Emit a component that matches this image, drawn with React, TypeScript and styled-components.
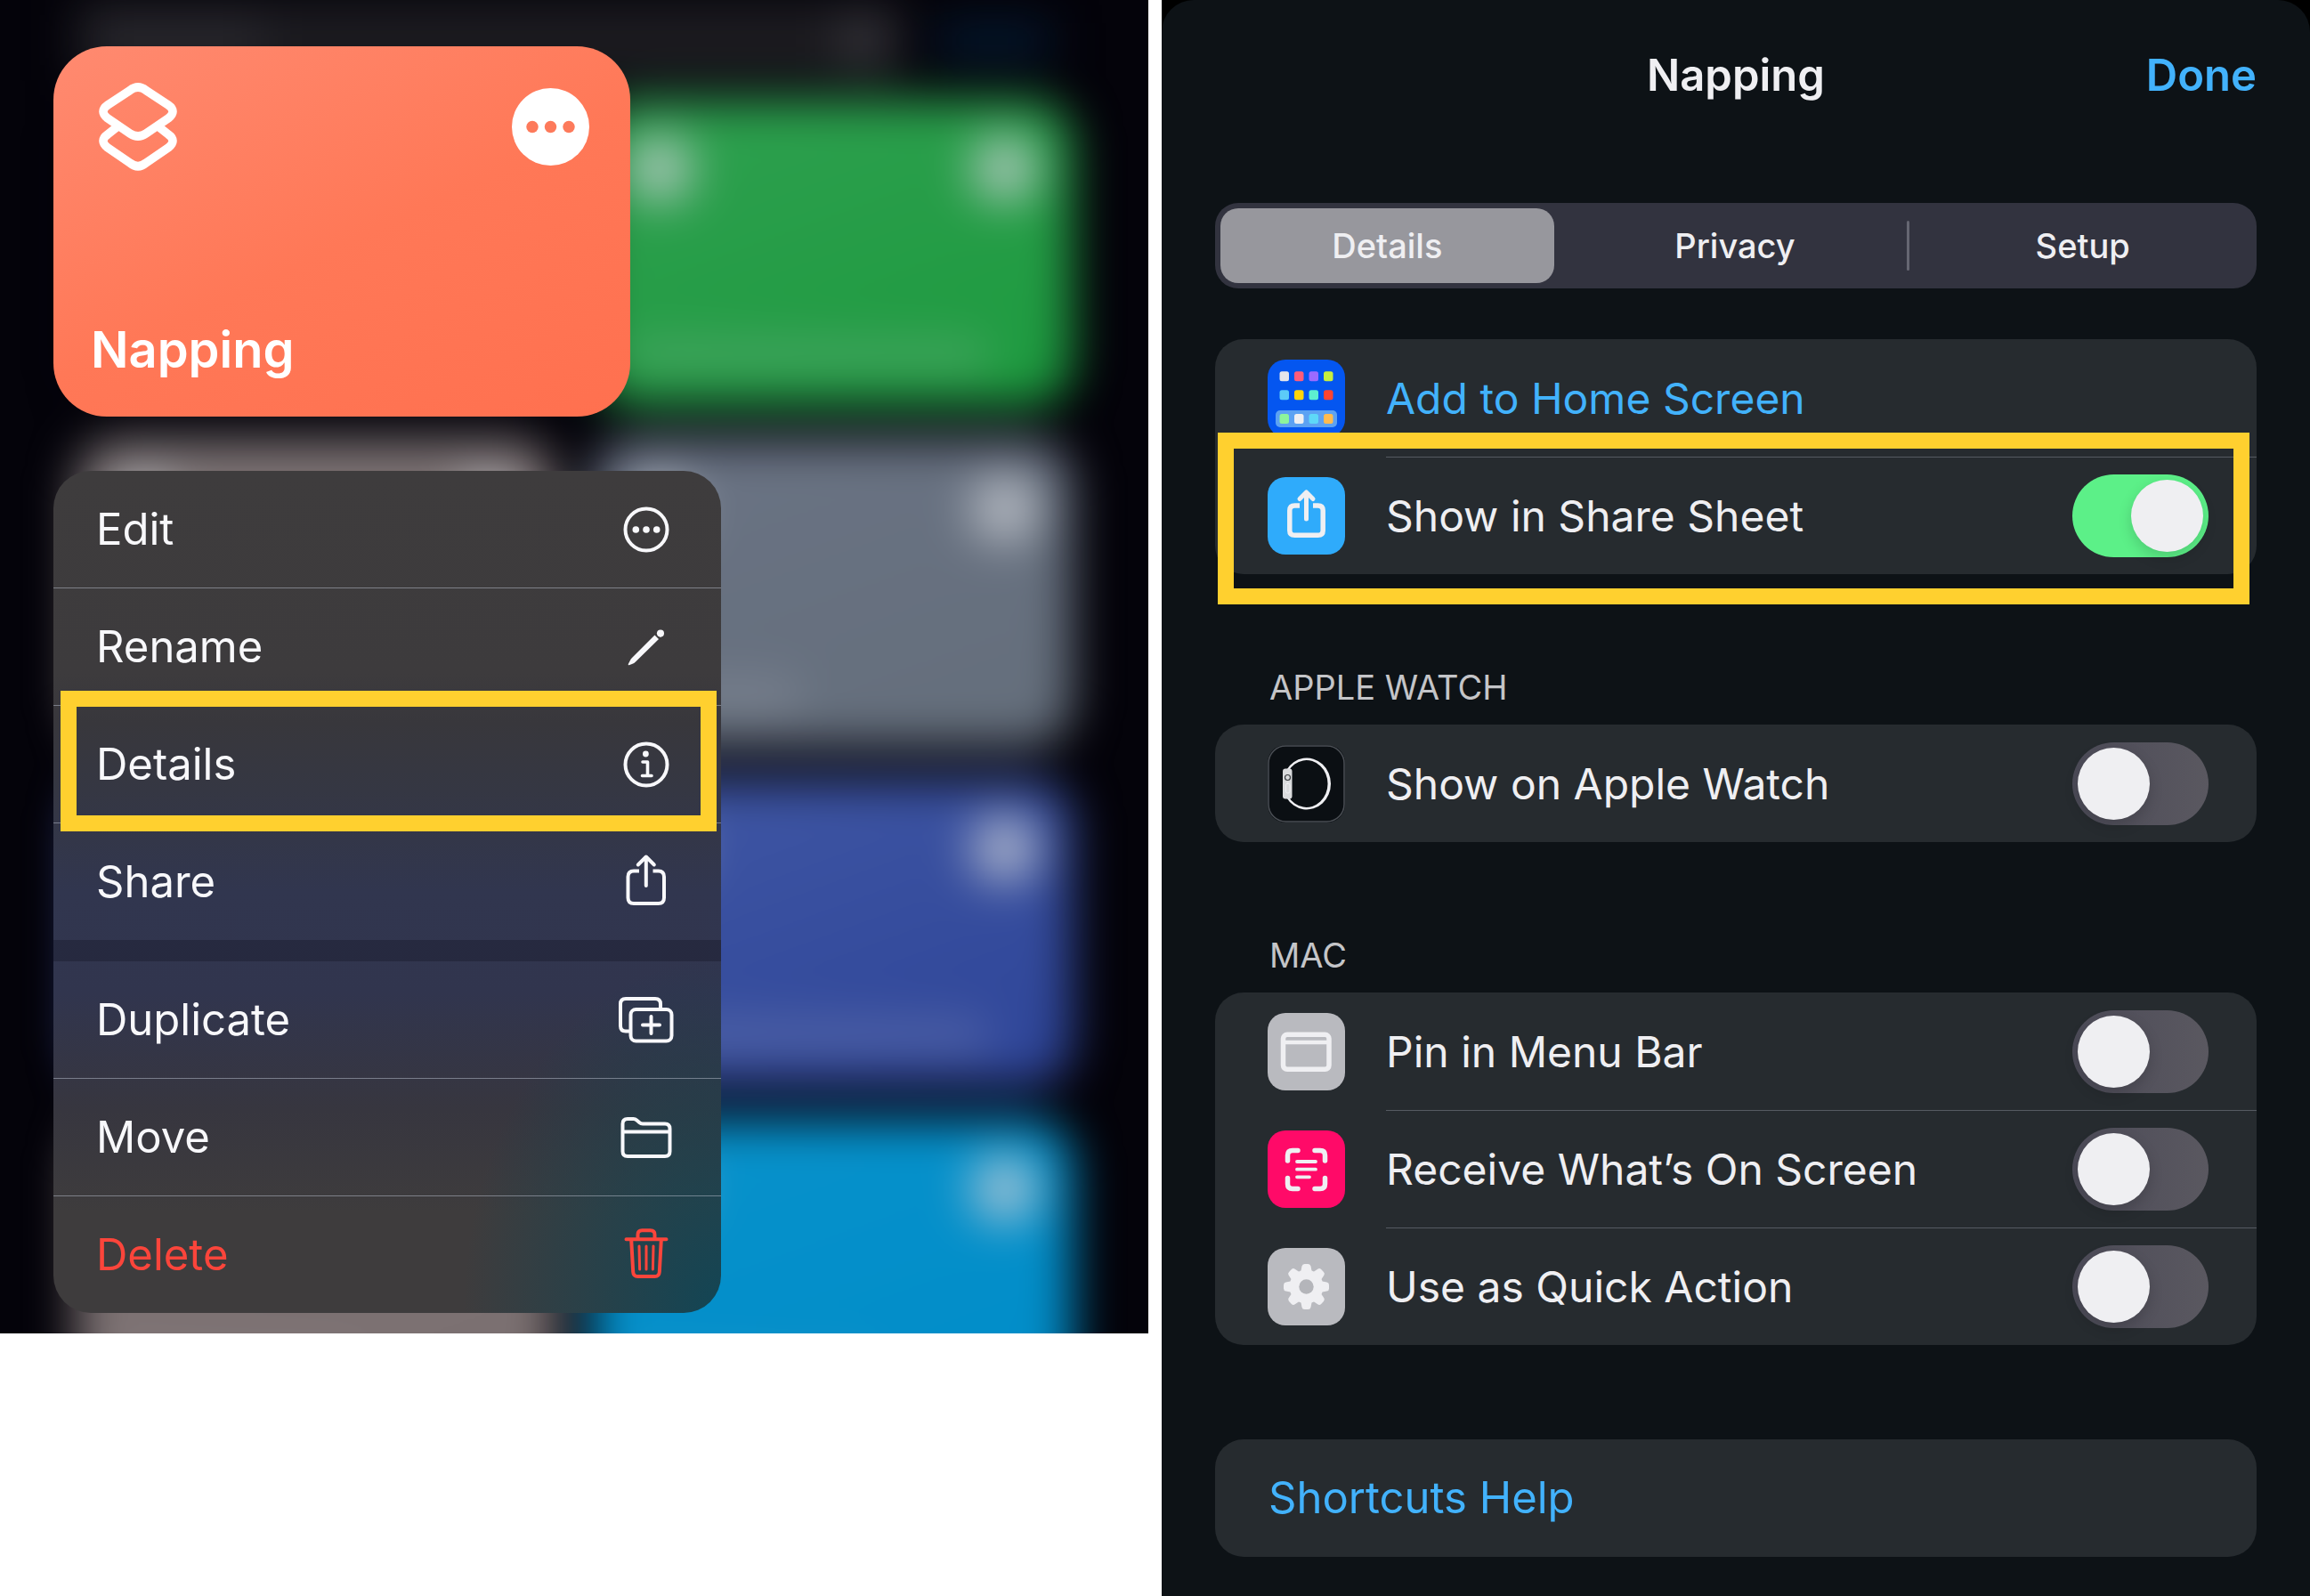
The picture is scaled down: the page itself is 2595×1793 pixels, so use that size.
import React, { useState } from "react";
import styled, { createGlobalStyle } from "styled-components";

const GlobalStyle = createGlobalStyle`
  *, *::before, *::after { box-sizing: border-box; }
  body {
    margin: 0;
    background: #ffffff;
    font-family: Inter, "Liberation Sans", sans-serif;
  }
  button, input { font: inherit; }
  button {
    margin: 0;
    padding: 0;
    border: 0;
    background: none;
    color: inherit;
    text-align: left;
    cursor: pointer;
  }
`;

const Page = styled.main`
  display: grid;
  grid-template-columns: 1fr 1fr;
  gap: 15px;
  align-items: start;
`;

/* ---------- Library screen with context menu ---------- */

const Library = styled.section`
  position: relative;
  overflow: hidden;
  display: flex;
  flex-direction: column;
  align-items: flex-start;
  gap: 61px;
  padding: 52px 60px 23px;
  background: #04030a;
`;

const Backdrop = styled.div`
  position: absolute;
  inset: 0;
  padding: 0 85px;
  filter: blur(26px);
`;

const SearchBar = styled.div`
  display: grid;
  grid-template-columns: 1fr 190px;
  align-items: center;
  height: 66px;
  margin-bottom: 46px;
`;

const SearchField = styled.div`
  display: flex;
  justify-content: space-between;
  align-items: center;
  height: 90px;
  padding: 0 20px;
  background: #1c1b20;
`;

const Smudge = styled.span<{ $width: number; $color: string }>`
  width: ${(p) => p.$width}px;
  height: 44px;
  background: ${(p) => p.$color};
`;

const CancelSmudge = styled(Smudge)`
  margin-left: 36px;
`;

const TileGrid = styled.div`
  display: grid;
  grid-template-columns: 1fr 1fr;
  grid-auto-rows: 345px;
  gap: 37px 40px;
`;

const Tile = styled.div<{ $from: string; $to: string }>`
  display: flex;
  flex-direction: column;
  justify-content: space-between;
  padding: 40px 38px;
  border-radius: 50px;
  background: linear-gradient(160deg, ${(p) => p.$from}, ${(p) => p.$to});
`;

const TileTop = styled.div`
  display: flex;
  justify-content: space-between;
`;

const TileDot = styled.span`
  width: 76px;
  height: 76px;
  border-radius: 50%;
  background: rgba(205, 210, 215, 0.75);
`;

const TileCaption = styled.span<{ $width: string }>`
  width: ${(p) => p.$width};
  height: 34px;
  background: rgba(200, 200, 210, 0.22);
`;

const ShortcutCard = styled.article`
  position: relative;
  display: flex;
  flex-direction: column;
  justify-content: space-between;
  width: 648px;
  height: 416px;
  padding: 41px 45px 40px 42px;
  border-radius: 60px;
  background: linear-gradient(155deg, #ff8a70 0%, #ff7857 52%, #ff704f 100%);
  color: #ffffff;
`;

const CardTop = styled.div`
  display: flex;
  justify-content: space-between;
  align-items: center;
`;

const CardTitle = styled.h2`
  margin: 0;
  font-size: 56px;
  line-height: 70px;
  font-weight: 600;
`;

const IconButton = styled.button`
  display: block;
  height: 88px;
`;

const Menu = styled.div`
  position: relative;
  width: 750px;
  overflow: hidden;
  border-radius: 42px;
  background:
    radial-gradient(ellipse 290px 400px at 100% 100%, rgba(16, 70, 86, 0.95), rgba(20, 66, 82, 0) 100%),
    linear-gradient(
      180deg,
      #3e3c3d 0%,
      #3d3b3d 24%,
      #38373c 30%,
      #353743 38%,
      #31364f 50%,
      #31354e 62%,
      #37363f 76%,
      #3e3c3d 88%
    );
`;

const MenuGroup = styled.div`
  & + & {
    border-top: 24px solid rgba(10, 10, 25, 0.28);
  }
`;

const MenuRow = styled.div`
  position: relative;
  & + & {
    border-top: 1px solid rgba(190, 195, 210, 0.5);
  }
`;

const MenuItem = styled.button<{ $danger?: boolean }>`
  display: flex;
  justify-content: space-between;
  align-items: center;
  width: 100%;
  height: 131px;
  padding: 0 52px 0 48px;
  font-size: 49px;
  line-height: 64px;
  color: ${(p) => (p.$danger ? "#fb453b" : "#f8f8fb")};
`;

const Highlight = styled.div<{ $inset: string }>`
  position: absolute;
  z-index: 2;
  inset: ${(p) => p.$inset};
  border: 18px solid #ffd02f;
  pointer-events: none;
`;

/* ---------- Details sheet ---------- */

const SheetFrame = styled.section`
  background: #000000;
`;

const Sheet = styled.div`
  min-height: 100vh;
  padding: 0 60px 40px;
  border-radius: 36px 36px 0 0;
  background: #0d1216;
  color: #efeff2;
`;

const SheetHeader = styled.header`
  display: grid;
  grid-template-columns: 1fr auto 1fr;
  align-items: center;
  height: 170px;
  margin-bottom: 58px;
  font-size: 49px;
  line-height: 64px;
  font-weight: 600;
`;

const SheetTitle = styled.h1`
  grid-column: 2;
  margin: 0;
  font: inherit;
`;

const DoneButton = styled.button`
  justify-self: end;
  color: #42b2fc;
`;

const Segments = styled.div`
  display: grid;
  grid-template-columns: repeat(3, 1fr);
  gap: 16px;
  height: 96px;
  margin-bottom: 57px;
  padding: 6px 8px 6px 6px;
  border-radius: 26px;
  background: #32333f;
`;

const Segment = styled.button<{ $active: boolean; $divided: boolean }>`
  position: relative;
  border-radius: 20px;
  background: ${(p) => (p.$active ? "#97979d" : "transparent")};
  font-size: 38px;
  line-height: 48px;
  font-weight: 500;
  text-align: center;

  &::before {
    content: "";
    display: ${(p) => (p.$divided ? "block" : "none")};
    position: absolute;
    left: -10px;
    top: 14px;
    bottom: 14px;
    width: 3px;
    border-radius: 2px;
    background: #666772;
  }
`;

const Section = styled.section<{ $gap: number }>`
  margin-bottom: ${(p) => p.$gap}px;
`;

const SectionLabel = styled.h2`
  margin: 0 0 18px;
  padding: 0 61px;
  font-size: 38px;
  line-height: 48px;
  font-weight: 400;
  color: #c4c5c8;
`;

const Group = styled.div`
  border-radius: 32px;
  background: #262b2f;
`;

const Row = styled.div`
  position: relative;
  display: grid;
  grid-template-columns: 87px 1fr;
  column-gap: 46px;
  align-items: center;
  height: 132px;
  padding-left: 59px;
  font-size: 48px;
  line-height: 64px;
`;

const RowBody = styled.div<{ $divider: boolean }>`
  display: flex;
  justify-content: space-between;
  align-items: center;
  height: 132px;
  padding-right: 54px;
  border-top: 1px solid ${(p) => (p.$divider ? "#555a62" : "transparent")};
`;

const RowLabel = styled.label`
  cursor: pointer;
`;

const RowAction = styled.button`
  color: #42b2fc;
`;

const Toggle = styled.input`
  appearance: none;
  display: block;
  width: 153px;
  height: 93px;
  margin: 0;
  padding: 6px;
  border-radius: 47px;
  background: linear-gradient(90deg, #4c4b58, #5a5860);
  cursor: pointer;

  &::before {
    content: "";
    display: block;
    width: 81px;
    height: 81px;
    border-radius: 50%;
    background: #efeff2;
    box-shadow: 0 6px 16px rgba(0, 0, 0, 0.16);
  }

  &:checked {
    background: #5cf088;
  }

  &:checked::before {
    margin-left: 60px;
  }
`;

const HelpLink = styled.a`
  display: block;
  padding: 34px 60px;
  font-size: 49px;
  line-height: 64px;
  color: #42b2fc;
  text-decoration: none;
`;

/* ---------- Icons ---------- */

const ShortcutsLogo = () => (
  <svg width="102" height="99" viewBox="-9 0 102 99" fill="none" stroke="#fff" strokeWidth="9.6" aria-hidden="true">
    <path d="M35 8.5 Q44 1.5 53 8.5 L78 25 Q88 32 78 40 L53 57 Q44 63 35 57 L10 40 Q0 32 10 25 Z" />
    <path d="M20 50 L10 58 Q0 65 10 73 L35 90 Q44 97.5 53 90 L78 73 Q88 65 78 58 L68 50" />
  </svg>
);

const MoreIcon = () => (
  <svg width="88" height="88" viewBox="0 0 88 88" aria-hidden="true">
    <circle cx="43.5" cy="43.5" r="43.5" fill="#fff" />
    <g fill="#fd7a5b">
      <circle cx="23" cy="43.5" r="6.7" />
      <circle cx="43.5" cy="43.5" r="6.7" />
      <circle cx="64" cy="43.5" r="6.7" />
    </g>
  </svg>
);

const MenuGlyph = ({ children }: { children: React.ReactNode }) => (
  <svg
    width="64"
    height="64"
    viewBox="0 0 64 64"
    fill="none"
    stroke="currentColor"
    strokeWidth="4"
    strokeLinecap="round"
    strokeLinejoin="round"
    aria-hidden="true"
  >
    {children}
  </svg>
);

const glyphs = {
  edit: (
    <>
      <circle cx="32" cy="32" r="23.5" />
      <g fill="currentColor" stroke="none">
        <circle cx="20.3" cy="32" r="3.8" />
        <circle cx="32" cy="32" r="3.8" />
        <circle cx="43.7" cy="32" r="3.8" />
      </g>
    </>
  ),
  rename: (
    <g fill="currentColor" stroke="none">
      <path d="M41.5 18.5 L46 23 L20 48.5 Q18.5 50 16 51 L12.6 52.2 Q11.3 52.4 11.8 51 L13.6 47.5 Q14.6 45.4 16 44 Z" />
      <circle cx="48" cy="16.6" r="4" />
      <path d="M43.6 16.6 L48 21 L49.5 19.5 L45 15 Z" />
    </g>
  ),
  details: (
    <>
      <circle cx="32" cy="32" r="23.5" />
      <circle cx="31.4" cy="20" r="3.4" fill="currentColor" stroke="none" />
      <path d="M28 29 H33.5 V44.5 M27.5 44.5 H38" strokeWidth="3.6" />
    </>
  ),
  share: (
    <>
      <path d="M24 19.5 H18 Q11.5 19.5 11.5 26 V49.5 Q11.5 56 18 56 H45.5 Q52 56 52 49.5 V26 Q52 19.5 45.5 19.5 H39.5" strokeLinecap="butt" />
      <path d="M31.8 4 V36 M22.8 12.5 L31.8 3.5 L40.8 12.5" />
    </>
  ),
  duplicate: (
    <>
      <path d="M14 44.5 H9 Q3 44.5 3 38.5 V14 Q3 8 9 8 H42 Q48 8 48 14 V19" strokeLinecap="butt" />
      <rect x="14.5" y="20" width="46" height="35.5" rx="6" />
      <path d="M37.5 28 V47 M28 37.5 H47" />
    </>
  ),
  move: (
    <path d="M5.5 25.5 H58.5 M5.5 16.5 Q5.5 11 11 11 H17.5 Q19.7 11 21.3 12.4 L24.2 15 Q25.8 16.4 28 16.4 H53 Q58.5 16.4 58.5 22 V47.5 Q58.5 53 53 53 H11 Q5.5 53 5.5 47.5 Z" />
  ),
  remove: (
    <>
      <path d="M9.5 14.3 H54.5 M22.5 13 V9 Q22.5 4.2 27.3 4.2 H36.7 Q41.5 4.2 41.5 9 V13" />
      <path d="M15.2 15 L17.2 51 Q17.5 56 22.5 56 H41.5 Q46.5 56 46.8 51 L48.8 15" />
      <path d="M24 22 L24.6 48 M32 22 V48 M40 22 L39.4 48" strokeWidth="3" />
    </>
  ),
};

const AppTile = ({ fill, children }: { fill: string; children: React.ReactNode }) => (
  <svg
    width="87"
    height="87"
    viewBox="0 0 87 87"
    fill="none"
    stroke="#efeff2"
    strokeLinecap="round"
    strokeLinejoin="round"
    aria-hidden="true"
  >
    <rect width="87" height="87" rx="20" fill={fill} stroke="none" />
    {children}
  </svg>
);

const homeColors = [
  ["#e6e6ea", "#ff5c7a", "#9b6bff", "#c6ee3e"],
  ["#5ccbf8", "#ffd60a", "#5eefd0", "#ff4430"],
  ["#8df59c", "#efeff2", "#5ed8f8", "#ffbb50"],
];

const HomeTile = () => (
  <AppTile fill="#0456f0">
    <g stroke="none">
      <rect x="9" y="57" width="69" height="19" rx="5" fill="#5ca2f3" />
      {homeColors.map((row, r) =>
        row.map((color, c) => (
          <rect key={color} x={13.5 + c * 16.5} y={[13.2, 34.2, 61][r]} width="10.5" height="11" rx="2.5" fill={color} />
        ))
      )}
    </g>
  </AppTile>
);

const ShareTile = () => (
  <AppTile fill="#2fabfb">
    <g strokeWidth="5.5">
      <path d="M36 32 H30.5 Q24.8 32 24.8 37.5 V60 Q24.8 65.3 30.5 65.3 H56.5 Q62.2 65.3 62.2 60 V37.5 Q62.2 32 56.5 32 H51" strokeLinecap="butt" />
      <path d="M43.5 18 V47 M36 24.5 L43.5 17 L51 24.5" strokeWidth="5" />
    </g>
  </AppTile>
);

const WatchTile = () => (
  <AppTile fill="#0b0f13">
    <rect x="1" y="1" width="85" height="85" rx="19.5" stroke="#4b4f55" strokeWidth="1.5" />
    <path
      d="M21.2 28 A27 29 0 1 1 21.2 59 L23.2 57.5 A24 26.4 0 1 0 23.2 29.5 Z"
      fill="#efeff2"
      stroke="none"
    />
    <rect x="17" y="26.5" width="10.5" height="34" rx="3" fill="#dadbdd" stroke="none" />
    <circle cx="22.5" cy="36.5" r="3" stroke="#3a3d40" strokeWidth="1.2" />
    <rect x="20.5" y="43" width="4.5" height="11" rx="2" stroke="#efeff2" strokeWidth="1" />
  </AppTile>
);

const MenuBarTile = () => (
  <AppTile fill="#b9babf">
    <g strokeWidth="5.5">
      <rect x="17.5" y="24.3" width="51.5" height="39" rx="4.5" />
      <path d="M18 33 H69" strokeWidth="4.5" />
    </g>
  </AppTile>
);

const ScreenTile = () => (
  <AppTile fill="#ff0a68">
    <path
      d="M22.5 34 V28 Q22.5 22.5 28 22.5 H34 M53 22.5 H59 Q64.5 22.5 64.5 28 V34 M64.5 53.5 V60 Q64.5 65.5 59 65.5 H53 M34 65.5 H28 Q22.5 65.5 22.5 60 V53.5"
      strokeWidth="5.5"
    />
    <path d="M33 35 H54 M33 43.7 H54 M33 52.3 H47" strokeWidth="3.8" />
  </AppTile>
);

const GearTile = () => (
  <AppTile fill="#b9babf">
    <g fill="#efeff2" stroke="none">
      {[0, 45, 90, 135, 180, 225, 270, 315].map((angle) => (
        <path
          key={angle}
          d="M37 28 L38.5 20.5 Q39 18 41.5 18 H45.5 Q48 18 48.5 20.5 L50 28 Z"
          transform={`rotate(${angle} 43.5 43.5)`}
        />
      ))}
      <circle cx="43.5" cy="43.5" r="19" />
      <circle cx="43.5" cy="43.5" r="8.2" fill="#b4b5ba" />
    </g>
  </AppTile>
);

/* ---------- Data ---------- */

const tiles = [
  { from: "#04030a", to: "#04030a", blank: true, caption: "0%" },
  { from: "#2fa050", to: "#1c9a3e", caption: "88%" },
  { from: "#7d7475", to: "#7d7071", caption: "60%" },
  { from: "#6a7384", to: "#646e7b", caption: "42%" },
  { from: "#3d4f9c", to: "#34479a", caption: "60%" },
  { from: "#4057a4", to: "#2d4498", caption: "88%" },
  { from: "#7f7475", to: "#7a6f70", caption: "60%" },
  { from: "#0892cb", to: "#008cc8", caption: "60%" },
];

const menuGroups: { label: string; glyph: keyof typeof glyphs; danger?: boolean; marked?: boolean }[][] = [
  [
    { label: "Edit", glyph: "edit" },
    { label: "Rename", glyph: "rename" },
    { label: "Details", glyph: "details", marked: true },
    { label: "Share", glyph: "share" },
  ],
  [
    { label: "Duplicate", glyph: "duplicate" },
    { label: "Move", glyph: "move" },
    { label: "Delete", glyph: "remove", danger: true },
  ],
];

const macRows = [
  { id: "menu-bar", label: "Pin in Menu Bar", icon: <MenuBarTile /> },
  { id: "on-screen", label: "Receive What’s On Screen", icon: <ScreenTile /> },
  { id: "quick-action", label: "Use as Quick Action", icon: <GearTile /> },
];

const tabs = ["Details", "Privacy", "Setup"];

type ToggleRowProps = {
  id: string;
  label: string;
  icon: React.ReactNode;
  on?: boolean;
  divider?: boolean;
  children?: React.ReactNode;
};

const ToggleRow = ({ id, label, icon, on = false, divider = false, children }: ToggleRowProps) => (
  <Row>
    {icon}
    <RowBody $divider={divider}>
      <RowLabel htmlFor={id}>{label}</RowLabel>
      <Toggle id={id} type="checkbox" role="switch" defaultChecked={on} />
    </RowBody>
    {children}
  </Row>
);

export default function App() {
  const [tab, setTab] = useState(0);

  return (
    <>
      <GlobalStyle />
      <Page>
        <Library>
          <Backdrop aria-hidden="true">
            <SearchBar>
              <SearchField>
                <Smudge $width={190} $color="#2a292f" />
                <Smudge $width={50} $color="#3a393f" />
              </SearchField>
              <CancelSmudge $width={130} $color="#04182e" />
            </SearchBar>
            <TileGrid>
              {tiles.map((tile, i) => (
                <Tile key={i} $from={tile.from} $to={tile.to}>
                  {!tile.blank && (
                    <>
                      <TileTop>
                        <TileDot />
                        <TileDot />
                      </TileTop>
                      <TileCaption $width={tile.caption} />
                    </>
                  )}
                </Tile>
              ))}
            </TileGrid>
          </Backdrop>

          <ShortcutCard>
            <CardTop>
              <ShortcutsLogo />
              <IconButton type="button" aria-label="More">
                <MoreIcon />
              </IconButton>
            </CardTop>
            <CardTitle>Napping</CardTitle>
          </ShortcutCard>

          <Menu>
            {menuGroups.map((group, g) => (
              <MenuGroup key={g}>
                {group.map((item) => (
                  <MenuRow key={item.label}>
                    <MenuItem type="button" $danger={item.danger}>
                      {item.label}
                      <MenuGlyph>{glyphs[item.glyph]}</MenuGlyph>
                    </MenuItem>
                    {item.marked && <Highlight $inset="-17px 5px -10px 8px" />}
                  </MenuRow>
                ))}
              </MenuGroup>
            ))}
          </Menu>
        </Library>

        <SheetFrame>
          <Sheet>
            <SheetHeader>
              <SheetTitle>Napping</SheetTitle>
              <DoneButton type="button">Done</DoneButton>
            </SheetHeader>

            <Segments role="tablist">
              {tabs.map((name, i) => (
                <Segment
                  key={name}
                  type="button"
                  role="tab"
                  aria-selected={tab === i}
                  $active={tab === i}
                  $divided={i > 0 && tab !== i && tab !== i - 1}
                  onClick={() => setTab(i)}
                >
                  {name}
                </Segment>
              ))}
            </Segments>

            <Section $gap={103}>
              <Group>
                <Row>
                  <HomeTile />
                  <RowBody $divider={false}>
                    <RowAction type="button">Add to Home Screen</RowAction>
                  </RowBody>
                </Row>
                <ToggleRow id="share-sheet" label="Show in Share Sheet" icon={<ShareTile />} on divider>
                  <Highlight $inset="-27px 8px -34px 3px" />
                </ToggleRow>
              </Group>
            </Section>

            <Section $gap={103}>
              <SectionLabel>APPLE WATCH</SectionLabel>
              <Group>
                <ToggleRow id="watch" label="Show on Apple Watch" icon={<WatchTile />} />
              </Group>
            </Section>

            <Section $gap={106}>
              <SectionLabel>MAC</SectionLabel>
              <Group>
                {macRows.map((row, i) => (
                  <ToggleRow key={row.id} id={row.id} label={row.label} icon={row.icon} divider={i > 0} />
                ))}
              </Group>
            </Section>

            <Group>
              <HelpLink href="#help">Shortcuts Help</HelpLink>
            </Group>
          </Sheet>
        </SheetFrame>
      </Page>
    </>
  );
}
